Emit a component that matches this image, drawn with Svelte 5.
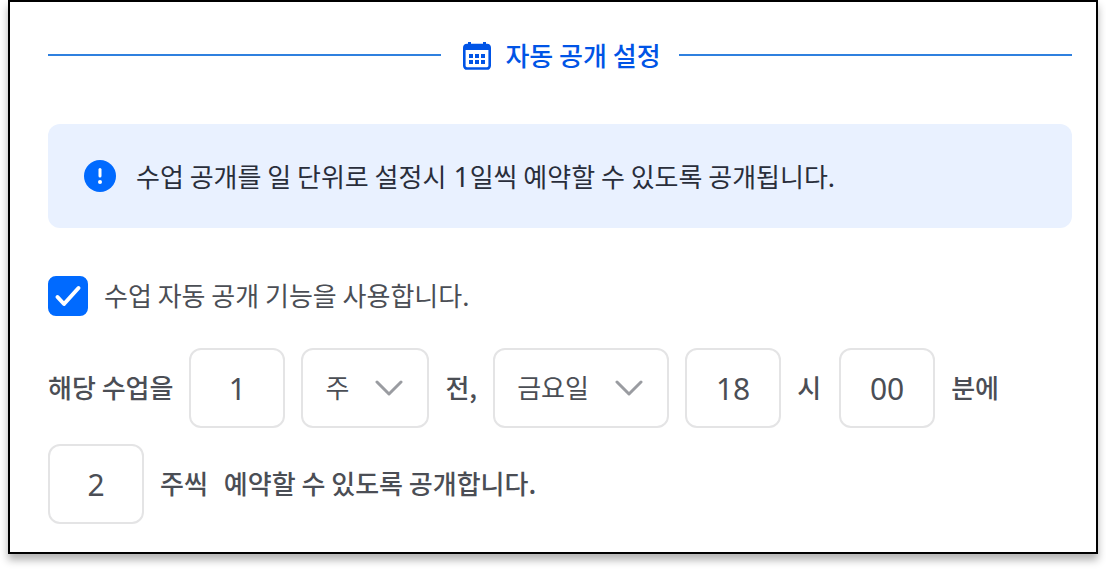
<script lang="ts">
	let enabled = $state(true);
	let leadCount = $state('1');
	let leadUnit = $state('주');
	let weekday = $state('금요일');
	let hour = $state('18');
	let minute = $state('00');
	let span = $state('2');

	const units = ['일', '주'];
	const weekdays = ['월요일', '화요일', '수요일', '목요일', '금요일', '토요일', '일요일'];
</script>

{#snippet chevron()}
	<svg class="chevron" viewBox="0 0 28 16" aria-hidden="true">
		<path d="M2 2l12 12L26 2" />
	</svg>
{/snippet}

<section class="panel">
	<h2 class="title">
		<svg class="calendar" viewBox="0 -2 28 30" aria-hidden="true">
			<path
				class="frame"
				d="M4 3h20a2.7 2.7 0 0 1 2.7 2.7v18.1a2.7 2.7 0 0 1-2.7 2.7H4a2.7 2.7 0 0 1-2.7-2.7V5.7A2.7 2.7 0 0 1 4 3z"
			/>
			<path d="M1 8V5a3 3 0 0 1 3-3h1V0h3v2h12V0h3v2h1a3 3 0 0 1 3 3v3z" />
			<path
				d="M6 12h4v4H6zM12 12h4v4h-4zM18 12h4v4h-4zM6 18h4v4H6zM12 18h4v4h-4zM18 18h4v4h-4z"
			/>
		</svg>
		<span>자동 공개 설정</span>
	</h2>

	<div class="notice">
		<svg class="info" viewBox="0 0 32 32" aria-hidden="true">
			<circle cx="16" cy="16" r="16" />
			<path d="M16 9.5v6.5" />
			<circle class="dot" cx="16" cy="22" r="2" />
		</svg>
		<p>수업 공개를 일 단위로 설정시<span class="num">{' 1'}</span>일씩 예약할 수 있도록 공개됩니다.</p>
	</div>

	<label class="toggle">
		<span class="box">
			<input type="checkbox" bind:checked={enabled} />
			{#if enabled}
				<svg viewBox="0 0 40 40" aria-hidden="true">
					<path d="M9.5 21l6.5 7L30.5 12" />
				</svg>
			{/if}
		</span>
		<span class="text">수업 자동 공개 기능을 사용합니다.</span>
	</label>

	<div class="schedule">
		<div class="row">
			<label class="text" for="lead-count">해당 수업을</label>
			<input id="lead-count" type="text" inputmode="numeric" bind:value={leadCount} />
			<span class="select unit">
				<select id="lead-unit" bind:value={leadUnit}>
					{#each units as unit}
						<option>{unit}</option>
					{/each}
				</select>
				{@render chevron()}
			</span>
			<label class="text" for="lead-unit">전,</label>
			<span class="select weekday">
				<select aria-label="요일" bind:value={weekday}>
					{#each weekdays as day}
						<option>{day}</option>
					{/each}
				</select>
				{@render chevron()}
			</span>
			<input id="hour" type="text" inputmode="numeric" bind:value={hour} />
			<label class="text" for="hour">시</label>
			<input id="minute" type="text" inputmode="numeric" bind:value={minute} />
			<label class="text" for="minute">분에</label>
		</div>
		<div class="row">
			<input id="span" type="text" inputmode="numeric" bind:value={span} />
			<label class="text" for="span">주씩</label>
			<span class="text">예약할 수 있도록 공개합니다.</span>
		</div>
	</div>
</section>

<style>
	:global(body) {
		background: #fff;
	}
	.panel {
		margin: 0 8px 16px;
		padding: 33px 24px 28px 38px;
		border: 2px solid #000;
		background: #fff;
		box-shadow: 0 6px 8px rgba(0, 0, 0, 0.3);
		color: #4b4e55;
		font-family: 'Noto Sans CJK KR', sans-serif;
		font-size: 26px;
		line-height: 40px;
	}
	.title {
		display: flex;
		align-items: center;
		gap: 14px;
		margin: 0 0 49px;
		color: #0054e6;
		font-size: 26px;
		font-weight: 500;
	}
	.title::before,
	.title::after {
		content: '';
		flex: 1;
		height: 2px;
		background: #2f80df;
	}
	.title::before {
		margin-right: 8px;
	}
	.title::after {
		margin-left: 4px;
	}
	.calendar {
		width: 28px;
		height: 30px;
		fill: currentColor;
	}
	.calendar .frame {
		fill: none;
		stroke: currentColor;
		stroke-width: 2.6;
	}
	.notice {
		display: flex;
		align-items: center;
		gap: 20px;
		margin-bottom: 48px;
		padding: 32px 36px;
		border-radius: 12px;
		background: #e9f1ff;
		color: #292e3b;
	}
	.notice p {
		margin: 0;
	}
	.num {
		font-family: 'Noto Sans', sans-serif;
		font-size: 28px;
		line-height: 1;
	}
	.info {
		flex: none;
		width: 32px;
		height: 32px;
		fill: #006aff;
	}
	.info path {
		stroke: #fff;
		stroke-width: 3;
		stroke-linecap: round;
	}
	.info .dot {
		fill: #fff;
	}
	.toggle {
		display: flex;
		align-items: center;
		gap: 16px;
		height: 40px;
		margin-bottom: 32px;
	}
	.text {
		padding-bottom: 2px;
	}
	.box {
		position: relative;
		width: 40px;
		height: 40px;
	}
	.box input {
		display: block;
		width: 100%;
		height: 100%;
		margin: 0;
		appearance: none;
		border: 2px solid #e3e4e6;
		border-radius: 8px;
	}
	.box input:checked {
		border-color: #006aff;
		background: #006aff;
	}
	.box svg {
		position: absolute;
		inset: 0;
		fill: none;
		stroke: #fff;
		stroke-width: 4;
		stroke-linecap: round;
		stroke-linejoin: round;
		pointer-events: none;
	}
	.schedule {
		display: flex;
		flex-direction: column;
		gap: 16px;
		font-weight: 500;
	}
	.row {
		display: flex;
		align-items: center;
		gap: 16px;
	}
	.row label {
		min-width: 26px;
	}
	.row input,
	.row select {
		box-sizing: border-box;
		height: 80px;
		border: 2px solid #e4e4e5;
		border-radius: 12px;
		background: #fff;
		color: #4b4e55;
		font-size: 26px;
	}
	.row input {
		width: 96px;
		padding: 0;
		font-family: 'Noto Sans', sans-serif;
		font-size: 30px;
		text-align: center;
	}
	.select {
		position: relative;
	}
	.unit {
		width: 128px;
	}
	.weekday {
		width: 176px;
	}
	.select select {
		display: block;
		width: 100%;
		padding: 0 22px 4px;
		appearance: none;
		font-family: inherit;
	}
	.chevron {
		position: absolute;
		top: 32px;
		right: 26px;
		width: 28px;
		height: 16px;
		fill: none;
		stroke: #9a9ca1;
		stroke-width: 3;
		stroke-linecap: round;
		stroke-linejoin: round;
		pointer-events: none;
	}
</style>
